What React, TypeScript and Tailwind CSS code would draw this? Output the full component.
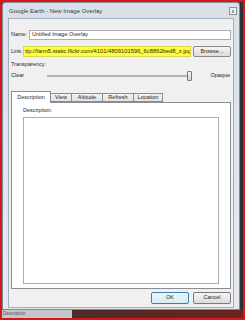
const tabs = [
  { label: 'Description', w: 'w-[40px]', active: true },
  { label: 'View', w: 'w-[22px]', active: false },
  { label: 'Altitude', w: 'w-[32px]', active: false },
  { label: 'Refresh', w: 'w-[32px]', active: false },
  { label: 'Location', w: 'w-[30px]', active: false },
]

export default function App() {
  return (
    <div className="flex h-[320px] w-[245px] flex-col bg-[#d8141c] p-[2px] font-['Liberation_Sans',Arial,sans-serif] text-[#1e1e1e]">
      <div className="flex h-[308px]">
        <div className="flex w-[238px] flex-col rounded-t-[3px] border border-[#7f8a96] bg-gradient-to-b from-[#d9e0e7] to-[#e6eaef] px-[5px] pb-[1px]">
          {/* title bar */}
          <div className="flex h-[15px] items-center justify-between">
            <span className="pl-[1px] text-[6px] leading-none text-[#3a3a3a]">Google Earth - New Image Overlay</span>
            <span className="-mr-[3px] mt-[1px] flex h-[8px] w-[8px] items-center justify-center border border-[#8b939c] bg-[#eef1f4]">
              <span className="h-[3px] w-[2px] bg-[#9aa2aa]" />
            </span>
          </div>

          {/* client area */}
          <div className="flex flex-1 flex-col border border-[#a5aeb8] bg-[#f0f0f0] px-[2px] pb-[3px] pt-[11px] text-[5.5px] leading-none">
            <div className="flex h-[10px] items-center">
              <span className="w-[18px]">Name:</span>
              <div className="flex h-full flex-1 items-center border border-[#abadb3] bg-white px-[2px]">Untitled Image Overlay</div>
            </div>

            <div className="mt-[6px] flex h-[11px] items-center">
              <span className="w-[12px]">Link:</span>
              <div className="flex h-full flex-1 items-center overflow-hidden whitespace-nowrap border border-[#d8d84a] bg-[#ffff3c] pl-[1px] text-[5.8px]">ttp://farm5.static.flickr.com/4101/4809101596_6c8862bed8_z.jpg</div>
              <button className="ml-[2px] flex h-full w-[38px] items-center justify-center rounded-[2px] border border-[#8a8a8a] bg-gradient-to-b from-[#f6f6f6] to-[#dcdcdc] text-[5.5px]">Browse...</button>
            </div>

            <div className="mt-[5px] h-[7px]">Transparency:</div>

            <div className="mt-[2px] flex h-[10px] items-center">
              <span className="w-[36px]">Clear</span>
              <div className="flex w-[145px] items-center">
                <div className="h-[2px] flex-1 border border-[#b4b4b4] bg-[#e6e6e6]" />
                <div className="h-[10px] w-[5px] rounded-[1px] border border-[#7a7a7a] bg-gradient-to-b from-[#f4f4f4] to-[#d2d2d2]" />
              </div>
              <span className="ml-auto pr-[1px]">Opaque</span>
            </div>

            {/* tabs */}
            <div className="mt-[10px] flex h-[11px] items-end">
              {tabs.map((t) =>
                t.active ? (
                  <div key={t.label} className={`relative z-10 -mb-[1px] flex h-[12px] items-center justify-center border border-b-0 border-[#898c95] bg-white ${t.w}`}>
                    {t.label}
                  </div>
                ) : (
                  <div key={t.label} className={`-ml-[1px] flex h-[9px] items-center justify-center border border-[#898c95] bg-gradient-to-b from-[#f2f2f2] to-[#e3e3e3] ${t.w}`}>
                    {t.label}
                  </div>
                ),
              )}
            </div>
            <div className="flex flex-1 flex-col border border-[#898c95] bg-white px-[11px] pb-[4px] pt-[5px]">
              <span className="h-[9px]">Description:</span>
              <div className="flex-1 border border-[#abadb3] bg-white" />
            </div>

            <div className="mt-[3px] flex h-[12px] justify-end gap-[4px]">
              <button className="flex w-[38px] items-center justify-center rounded-[2px] border border-[#3c7fb1] bg-gradient-to-b from-[#eaf6fd] to-[#d9ebf6] text-[5.5px]">OK</button>
              <button className="flex w-[38px] items-center justify-center rounded-[2px] border border-[#7a7a7a] bg-gradient-to-b from-[#f4f4f4] to-[#dcdcdc] text-[5.5px]">Cancel</button>
            </div>
          </div>
        </div>
        <div className="w-[3px] bg-[#2c3136]" />
      </div>

      {/* strip behind the dialog */}
      <div className="flex h-[8px]">
        <div className="flex w-[70px] items-center bg-[#c3c7cb] pl-[1px] text-[4.5px] leading-none text-[#555]">Description</div>
        <div className="flex-1 bg-gradient-to-r from-[#4a2c28] to-[#6a2420]" />
      </div>
    </div>
  )
}
